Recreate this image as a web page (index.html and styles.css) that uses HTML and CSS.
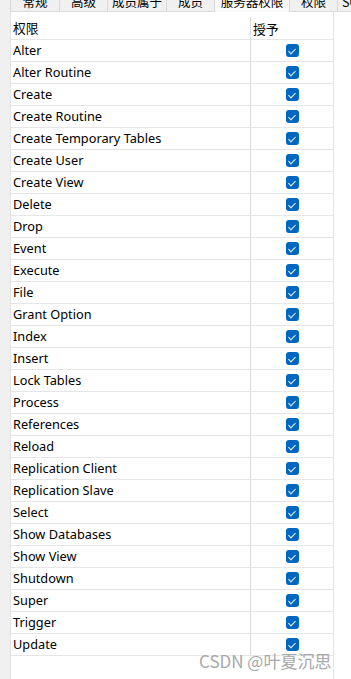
FILE: index.html
```html
<!DOCTYPE html>
<html lang="zh">
<head>
<meta charset="utf-8">
<title>服务器权限</title>
<link rel="stylesheet" href="styles.css">
</head>
<body>
<div class="tabs">
  <div class="tab">常规</div>
  <div class="tab">高级</div>
  <div class="tab">成员属于</div>
  <div class="tab">成员</div>
  <div class="tab tab-active">服务器权限</div>
  <div class="tab">权限</div>
  <div class="tab">SQL 预览</div>
</div>
<div class="panel">
  <div class="grid">
    <div class="row head"><div class="c1">权限</div><div class="c2 head-c2">授予</div></div>
    <div class="row"><div class="c1">Alter</div><div class="c2"><span class="chk"></span></div></div>
    <div class="row"><div class="c1">Alter Routine</div><div class="c2"><span class="chk"></span></div></div>
    <div class="row"><div class="c1">Create</div><div class="c2"><span class="chk"></span></div></div>
    <div class="row"><div class="c1">Create Routine</div><div class="c2"><span class="chk"></span></div></div>
    <div class="row"><div class="c1">Create Temporary Tables</div><div class="c2"><span class="chk"></span></div></div>
    <div class="row"><div class="c1">Create User</div><div class="c2"><span class="chk"></span></div></div>
    <div class="row"><div class="c1">Create View</div><div class="c2"><span class="chk"></span></div></div>
    <div class="row"><div class="c1">Delete</div><div class="c2"><span class="chk"></span></div></div>
    <div class="row"><div class="c1">Drop</div><div class="c2"><span class="chk"></span></div></div>
    <div class="row"><div class="c1">Event</div><div class="c2"><span class="chk"></span></div></div>
    <div class="row"><div class="c1">Execute</div><div class="c2"><span class="chk"></span></div></div>
    <div class="row"><div class="c1">File</div><div class="c2"><span class="chk"></span></div></div>
    <div class="row"><div class="c1">Grant Option</div><div class="c2"><span class="chk"></span></div></div>
    <div class="row"><div class="c1">Index</div><div class="c2"><span class="chk"></span></div></div>
    <div class="row"><div class="c1">Insert</div><div class="c2"><span class="chk"></span></div></div>
    <div class="row"><div class="c1">Lock Tables</div><div class="c2"><span class="chk"></span></div></div>
    <div class="row"><div class="c1">Process</div><div class="c2"><span class="chk"></span></div></div>
    <div class="row"><div class="c1">References</div><div class="c2"><span class="chk"></span></div></div>
    <div class="row"><div class="c1">Reload</div><div class="c2"><span class="chk"></span></div></div>
    <div class="row"><div class="c1">Replication Client</div><div class="c2"><span class="chk"></span></div></div>
    <div class="row"><div class="c1">Replication Slave</div><div class="c2"><span class="chk"></span></div></div>
    <div class="row"><div class="c1">Select</div><div class="c2"><span class="chk"></span></div></div>
    <div class="row"><div class="c1">Show Databases</div><div class="c2"><span class="chk"></span></div></div>
    <div class="row"><div class="c1">Show View</div><div class="c2"><span class="chk"></span></div></div>
    <div class="row"><div class="c1">Shutdown</div><div class="c2"><span class="chk"></span></div></div>
    <div class="row"><div class="c1">Super</div><div class="c2"><span class="chk"></span></div></div>
    <div class="row"><div class="c1">Trigger</div><div class="c2"><span class="chk"></span></div></div>
    <div class="row"><div class="c1">Update</div><div class="c2"><span class="chk"></span></div></div>
  </div>
</div>
<div class="watermark">CSDN @叶夏沉思</div>
</body>
</html>
```
FILE: styles.css
```css
html, body {
  margin: 0;
  padding: 0;
  height: 100%;
  overflow: hidden;
}
body {
  background: #f0f0f0;
  font-family: "Noto Sans", "Noto Sans CJK SC", sans-serif;
  font-size: 12.75px;
  color: #000;
  display: flex;
  flex-direction: column;
}
.tabs {
  display: flex;
  height: 21px;
  margin-top: -9px;
  padding-left: 10px;
  flex: none;
  overflow: hidden;
}
.tab {
  flex: none;
  min-width: 48px;
  padding: 0 4px;
  box-sizing: border-box;
  height: 21px;
  line-height: 19px;
  text-align: center;
  font-family: "Noto Sans CJK SC", sans-serif;
  font-size: 12.5px;
  color: #000;
  background: #f0f0f0;
  border: 1px solid #d9d9d9;
  border-left: none;
  white-space: nowrap;
}
.tab:first-child {
  border-left: 1px solid #d9d9d9;
  min-width: 50px;
}
.tab-active {
  background: #f9f9f9;
  min-width: 75px;
  height: 22px;
  border-bottom: none;
}
.panel {
  flex: 1;
  margin-left: 10px;
  background: #fff;
  border-left: 1px solid #e3e3e3;
  display: flex;
}
.grid {
  width: 322px;
  border-right: 1px solid #e3e3e3;
}
.row {
  display: flex;
  height: 22px;
  border-bottom: 1px solid #e6e6e6;
  box-sizing: border-box;
}
.row.head {
  height: 28px;
  padding-top: 5px;
}
.c1 {
  width: 240px;
  padding-left: 2px;
  border-right: 1px solid #dadada;
  box-sizing: border-box;
  line-height: 21px;
  white-space: nowrap;
}
.head .c1, .head .c2 {
  font-family: "Noto Sans CJK SC", sans-serif;
  line-height: 21px;
}
.c2 {
  flex: 1;
  display: flex;
  align-items: center;
  justify-content: center;
}
.head-c2 {
  justify-content: flex-start;
  padding-left: 2px;
}
.chk {
  width: 13px;
  height: 13px;
  border-radius: 3px;
  background: #0067c0;
  position: relative;
}
.chk::after {
  content: "";
  position: absolute;
  left: 4px;
  top: 2.5px;
  width: 3px;
  height: 6px;
  border-right: 1px solid #e8f0fa;
  border-bottom: 1px solid #e8f0fa;
  transform: rotate(45deg);
}
.watermark {
  position: absolute;
  left: 199px;
  top: 648px;
  font-family: "Noto Sans CJK SC", sans-serif;
  font-size: 17px;
  color: #a8a8a8;
  white-space: nowrap;
}
```
